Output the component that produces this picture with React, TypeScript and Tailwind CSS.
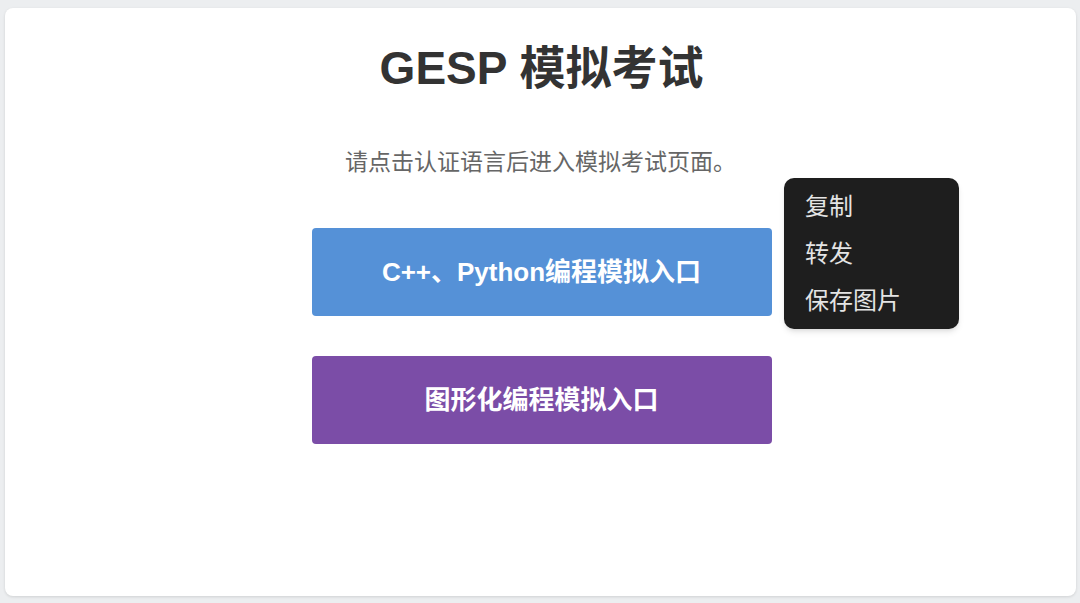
const font = { fontFamily: '"Liberation Sans", "Noto Sans CJK SC", sans-serif' };

const menuItems = ['复制', '转发', '保存图片'];

const ContextMenu = () => (
  <div className="absolute left-[779px] top-[170px] w-[175px] rounded-[10px] bg-[#1e1e1e] pt-[3px] pb-[7px] shadow-md">
    {menuItems.map((item) => (
      <div
        key={item}
        className="h-[47px] pl-[21px] text-[24px] leading-[47px] text-[#e4e4e4]"
        style={{ fontFamily: '"Noto Sans CJK SC", sans-serif' }}
      >
        {item}
      </div>
    ))}
  </div>
);

export default function App() {
  return (
    <div className="h-screen w-full bg-[#eceef0] pt-[8px] pl-[5px] pr-[4px] pb-[7px]" style={font}>
      <div className="relative flex h-full flex-col items-center rounded-[8px] bg-white shadow-[0_1px_3px_rgba(0,0,0,0.12)]">
        <h1 className="mt-[33px] ml-[2px] text-[46px] font-bold leading-[54px] text-[#333333]">GESP 模拟考试</h1>
        <p className="mt-[52px] text-[23px] leading-[30px] text-[#666666]">请点击认证语言后进入模拟考试页面。</p>

        <div className="mt-[51px] ml-[2px] flex flex-col gap-[40px]">
          <button className="h-[88px] w-[460px] rounded-[4px] bg-[#5591d7] text-[26px] font-bold text-white">
            C++、Python编程模拟入口
          </button>
          <button className="h-[88px] w-[460px] rounded-[4px] bg-[#7b4da7] text-[26px] font-bold text-white">
            图形化编程模拟入口
          </button>
        </div>

        <ContextMenu />
      </div>
    </div>
  );
}
